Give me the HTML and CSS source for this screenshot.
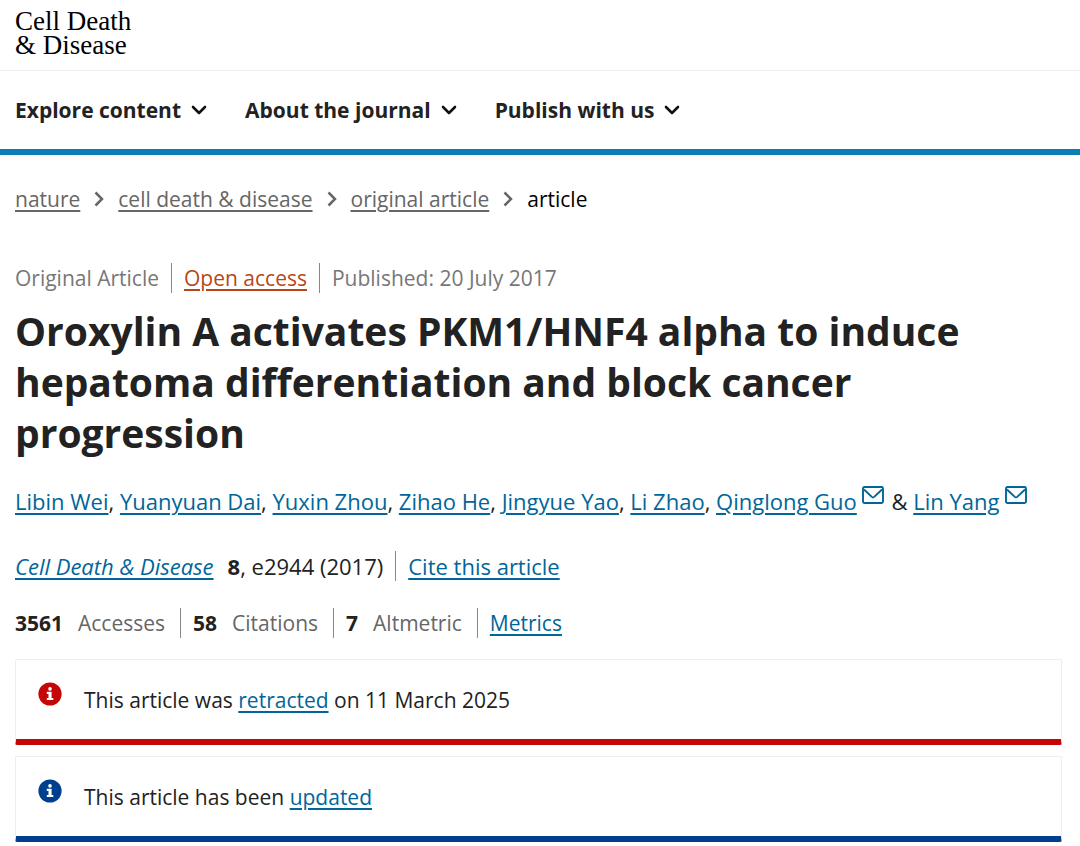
FILE: index.html
```html
<!DOCTYPE html>
<html lang="en">
<head>
<meta charset="utf-8">
<meta name="viewport" content="width=device-width, initial-scale=1">
<title>Oroxylin A activates PKM1/HNF4 alpha to induce hepatoma differentiation and block cancer progression</title>
<link rel="stylesheet" href="styles.css">
</head>
<body>
<svg class="sprite" aria-hidden="true">
  <symbol id="chevron-down" viewBox="0 0 16 10"><path d="M2 2l6 6 6-6" fill="none" stroke="currentColor" stroke-width="2.6" stroke-linecap="round" stroke-linejoin="round"/></symbol>
  <symbol id="chevron-right" viewBox="0 0 10 16"><path d="M1.5 1.5l6.5 6.5-6.5 6.5" fill="none" stroke="currentColor" stroke-width="2.5"/></symbol>
  <symbol id="mail" viewBox="0 0 22 18"><rect x="1" y="1" width="20" height="16" rx="1.5" fill="none" stroke="currentColor" stroke-width="1.9"/><path d="M2 3.5l7.8 7.4a1.8 1.8 0 0 0 2.4 0L20 3.5" fill="none" stroke="currentColor" stroke-width="1.9"/></symbol>
  <symbol id="info" viewBox="0 0 24 24"><circle cx="12" cy="12" r="11.6" fill="currentColor"/><circle cx="12" cy="6.9" r="1.8" fill="#fff"/><path d="M8.8 9.8h4.8v6.1h1.7v2.2H8.8v-2.2h1.7V12H8.8z" fill="#fff"/></symbol>
</svg>
<header class="header">
  <a class="logo" href="#">Cell Death<br>&amp; Disease</a>
</header>
<nav class="nav" aria-label="Journal">
  <button class="nav-item" type="button">Explore content <svg class="nav-icon"><use href="#chevron-down"/></svg></button>
  <button class="nav-item" type="button">About the journal <svg class="nav-icon"><use href="#chevron-down"/></svg></button>
  <button class="nav-item" type="button">Publish with us <svg class="nav-icon"><use href="#chevron-down"/></svg></button>
</nav>
<main class="main">
  <nav class="crumbs" aria-label="Breadcrumb">
    <a href="#">nature</a><svg class="crumb-icon"><use href="#chevron-right"/></svg>
    <a href="#">cell death &amp; disease</a><svg class="crumb-icon"><use href="#chevron-right"/></svg>
    <a href="#">original article</a><svg class="crumb-icon"><use href="#chevron-right"/></svg>
    <span class="crumb-current">article</span>
  </nav>
  <ul class="list meta">
    <li>Original Article</li>
    <li><a class="open-access" href="#">Open access</a></li>
    <li>Published: <time datetime="2017-07-20">20 July 2017</time></li>
  </ul>
  <h1 class="title">Oroxylin A activates PKM1/HNF4 alpha to induce hepatoma differentiation and block cancer progression</h1>
  <p class="authors"><a href="#">Libin Wei</a>, <a href="#">Yuanyuan Dai</a>, <a href="#">Yuxin Zhou</a>, <a href="#">Zihao He</a>, <a href="#">Jingyue Yao</a>, <a href="#">Li Zhao</a>, <a href="#">Qinglong Guo</a><svg class="mail-icon"><use href="#mail"/></svg> &amp; <a href="#">Lin Yang</a><svg class="mail-icon"><use href="#mail"/></svg></p>
  <ul class="list journal">
    <li><a href="#"><i>Cell Death &amp; Disease</i></a><span class="volume"><b>8</b>, e2944 (2017)</span></li>
    <li><a href="#">Cite this article</a></li>
  </ul>
  <ul class="list metrics">
    <li><b>3561</b><span class="metric-label">Accesses</span></li>
    <li><b>58</b><span class="metric-label">Citations</span></li>
    <li><b>7</b><span class="metric-label">Altmetric</span></li>
    <li><a href="#">Metrics</a></li>
  </ul>
  <div class="notice notice-retracted">
    <svg class="notice-icon"><use href="#info"/></svg>
    <p>This article was <a href="#">retracted</a> on 11 March 2025</p>
  </div>
  <div class="notice notice-updated">
    <svg class="notice-icon"><use href="#info"/></svg>
    <p>This article has been <a href="#">updated</a></p>
  </div>
</main>
</body>
</html>
```
FILE: styles.css
```css
* { box-sizing: border-box; }
body {
  margin: 0;
  background: #fff;
  color: #222;
  font: 21px/30px "Open Sans", "Noto Sans", sans-serif;
}
p, h1, ul { margin: 0; padding: 0; }
a {
  color: #006699;
  text-decoration-thickness: 2px;
  text-underline-offset: 3px;
}
.sprite { display: none; }
.header {
  padding: 9px 15px 13px;
  border-bottom: 1px solid #eee;
}
.logo {
  display: block;
  width: fit-content;
  color: #000;
  font: 27px/24px "Liberation Serif", serif;
  text-decoration: none;
}
.nav {
  display: flex;
  flex-wrap: wrap;
  gap: 38px;
  padding: 24px 15px;
  border-bottom: 6px solid #0a7db8;
}
.nav-item {
  display: flex;
  align-items: center;
  gap: 10px;
  padding: 0;
  border: 0;
  background: none;
  color: #222;
  font: inherit;
  font-weight: 700;
}
.nav-icon { width: 16px; height: 10px; color: #111; }
.main { padding: 29px 18px 4px 15px; }
.crumbs {
  display: flex;
  flex-wrap: wrap;
  align-items: center;
}
.crumbs a { color: #666; }
.crumb-icon {
  width: 10px;
  height: 16px;
  margin: 0 14px;
  color: #666;
}
.crumb-current { color: #000; }
.list {
  display: flex;
  flex-wrap: wrap;
  list-style: none;
}
.list li + li {
  margin-left: 12px;
  padding-left: 12px;
  border-left: 1px solid #888;
}
.meta { margin-top: 49px; color: #777; }
.meta .open-access { color: #b74616; }
.title {
  max-width: 1020px;
  margin-top: 12px;
  font-size: 39px;
  line-height: 51px;
  font-weight: 700;
}
.authors { margin-top: 28px; font-size: 22px; }
.mail-icon {
  width: 22px;
  height: 18px;
  margin: 0 2px 0 5px;
  vertical-align: 6px;
  color: #006699;
}
.journal { margin-top: 35px; font-size: 22px; }
.volume { margin-left: 14px; }
.metrics { margin-top: 27px; }
.metric-label { margin-left: 15px; color: #666; }
.list.metrics li + li { margin-left: 15px; }
.notice {
  display: flex;
  align-items: flex-start;
  gap: 22px;
  padding: 22px;
  border: 1px solid #eee;
  border-bottom-width: 6px;
  border-radius: 2px;
}
.notice p { padding: 3px 0 2px; }
.notice-icon { width: 24px; height: 24px; flex: none; }
.notice-retracted { margin-top: 21px; border-bottom-color: #c40606; }
.notice-retracted .notice-icon { color: #c40606; }
.notice-updated { margin-top: 11px; border-bottom-color: #003f8d; }
.notice-updated .notice-icon { color: #003f8d; }
```
